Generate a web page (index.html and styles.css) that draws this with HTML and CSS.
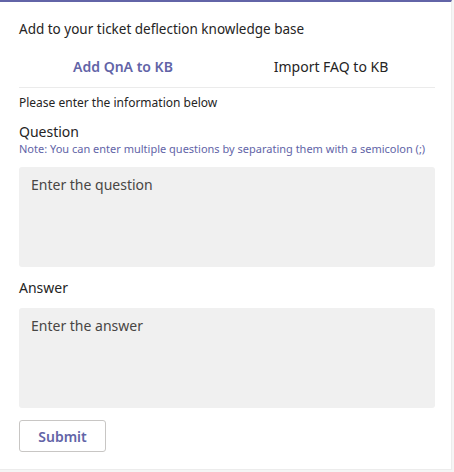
FILE: index.html
```html
<!DOCTYPE html>
<html>
<head>
<meta charset="utf-8">
<link rel="stylesheet" href="styles.css">
</head>
<body>
<div class="card">
  <div class="title">Add to your ticket deflection knowledge base</div>
  <div class="tabs">
    <div class="tab active">Add QnA to KB</div>
    <div class="tab">Import FAQ to KB</div>
  </div>
  <div class="intro">Please enter the information below</div>
  <div class="label">Question</div>
  <div class="note">Note: You can enter multiple questions by separating them with a semicolon (;)</div>
  <textarea class="field q" placeholder="Enter the question"></textarea>
  <div class="label answer">Answer</div>
  <textarea class="field a" placeholder="Enter the answer"></textarea>
  <button class="submit">Submit</button>
</div>
</body>
</html>
```
FILE: styles.css
```css
html, body { margin: 0; padding: 0; background: #f5f5f5; }
body { font-family: "Segoe UI", "Noto Sans", "Open Sans", sans-serif; color: #252424; }
.card {
  width: 452px;
  height: 470px;
  box-sizing: border-box;
  background: #fff;
  border-top: 2px solid #6264a7;
  border-right: 1px solid #ececec;
  border-bottom: 1px solid #ececec;
  padding: 0 16px 0 19px;
  display: flex;
  flex-direction: column;
}
.title { font-size: 13.5px; margin-top: 18px; line-height: 18px; }
.tabs { display: flex; border-bottom: 1px solid #ebebeb; margin-top: 19px; height: 30px; }
.tab { flex: 1; text-align: center; font-size: 14px; font-weight: 400; line-height: 19px; }
.tab.active { color: #6264a7; font-weight: 600; }
.intro { font-size: 12px; margin-top: 7px; line-height: 16px; }
.label { font-size: 14px; margin-top: 12px; line-height: 18px; }
.note { font-size: 11px; color: #6264a7; line-height: 14px; margin-top: 1px; }
.field {
  font-family: inherit;
  resize: none;
  border: none;
  background: #f0f0f0;
  border-radius: 3px;
  height: 100px;
  box-sizing: border-box;
  margin-top: 11px;
  padding: 8px 12px;
  font-size: 14px;
  outline: none;
  width: 100%;
}
.field::placeholder { color: #484644; }
.label.answer { margin-top: 12px; }
.submit {
  margin-top: 12px;
  width: 87px;
  height: 32px;
  background: #fff;
  border: 1px solid #c8c6c4;
  border-radius: 3px;
  font-family: inherit;
  font-size: 14px;
  font-weight: 600;
  color: #6264a7;
}
```
